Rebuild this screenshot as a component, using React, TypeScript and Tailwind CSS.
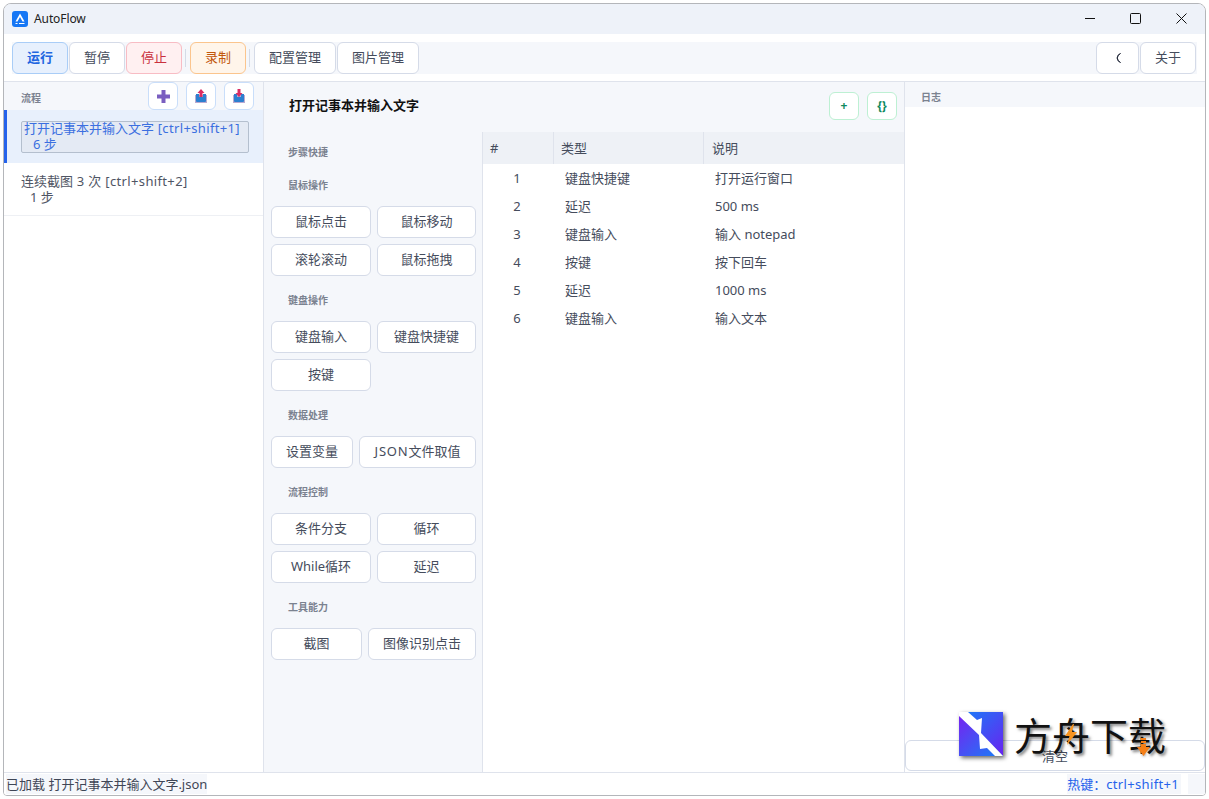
import type { ReactNode } from 'react';

const FONT = "font-['Noto_Sans','Noto_Sans_CJK_SC',sans-serif]";

const steps: [string, string, string][] = [
    ['1', '键盘快捷键', '打开运行窗口'],
    ['2', '延迟', '500 ms'],
    ['3', '键盘输入', '输入 notepad'],
    ['4', '按键', '按下回车'],
    ['5', '延迟', '1000 ms'],
    ['6', '键盘输入', '输入文本'],
];

function TopBtn({ className, children }: { className: string; children: ReactNode }) {
    return (
        <div className={`h-8 flex items-center justify-center rounded-[6px] border text-[13px] ${className}`}>
            {children}
        </div>
    );
}

function Sep() {
    return <div className="w-px h-[18px] ml-[3px] mr-[4px] bg-[#d5dbe6]" />;
}

function StepBtn({ children }: { children: ReactNode }) {
    return (
        <div className="h-8 flex items-center justify-center rounded-[6px] border border-[#d5dbe8] bg-white text-[13px] text-[#454c5c]">
            {children}
        </div>
    );
}

function GroupLabel({ children }: { children: ReactNode }) {
    return <div className="pl-[17px] text-[10px] leading-[14px] font-bold text-[#7b8290]">{children}</div>;
}

function IconBtn({ children }: { children: ReactNode }) {
    return (
        <div className="w-[30px] h-[28px] flex items-center justify-center rounded-[6px] border border-[#c9defa] bg-white">
            {children}
        </div>
    );
}

function TrayIcon({ down }: { down?: boolean }) {
    return (
        <svg width="16" height="18" viewBox="0 0 16 18">
            <rect x="2" y="8" width="12" height="8" fill="#b9a9d0" />
            <path d="M3 7h3v3h4V7h3v7a1 1 0 0 1-1 1H4a1 1 0 0 1-1-1z" fill="#2b7fd0" />
            {down ? (
                <path d="M6.500 2h3v4h2L8 10 4.500 6h2z" fill="#d92c63" />
            ) : (
                <path d="M8 2l3.500 4h-2v4h-3V6h-2z" fill="#d92c63" />
            )}
        </svg>
    );
}

export default function App() {
    return (
        <div className={`w-[1209px] h-[799px] bg-white p-[3px] ${FONT}`}>
            <div className="w-[1203px] h-[793px] flex flex-col border border-[#b4b6ba] rounded-t-[8px] rounded-b-[4px] overflow-hidden bg-white">
                {/* title bar */}
                <div className="h-[30px] shrink-0 flex items-center bg-[#eef2f9]">
                    <svg className="ml-[8px]" width="16" height="16" viewBox="0 0 16 16">
                        <rect width="16" height="16" rx="3" fill="#1677f5" />
                        <path d="M8 2.500L3.500 10.500h2L8 6l2.500 4.500h2z" fill="#fff" />
                        <path d="M3.500 12.500h2M7 12.500h5.500" stroke="#fff" strokeWidth="1" />
                    </svg>
                    <span className="ml-[6px] text-[12px] tracking-[-0.1px] text-[#222]">AutoFlow</span>
                    <div className="ml-auto pb-[2px] flex items-center text-[#111]">
                        <svg className="mr-[35px]" width="10" height="10" viewBox="0 0 10 10">
                            <path d="M0 5.500h10" stroke="currentColor" strokeWidth="1" />
                        </svg>
                        <svg className="mr-[35px]" width="11" height="11" viewBox="0 0 11 11">
                            <rect x=".5" y=".5" width="10" height="10" rx="1" fill="none" stroke="currentColor" strokeWidth="1" />
                        </svg>
                        <svg className="mr-[18px]" width="11" height="11" viewBox="0 0 11 11">
                            <path d="M.5.500l10 10M10.500.500l-10 10" stroke="currentColor" strokeWidth="1" />
                        </svg>
                    </div>
                </div>

                {/* toolbar */}
                <div className="h-[48px] shrink-0 flex items-start pt-[8px] pl-[8px] pr-[8px] border-b border-[#dfe3ec]">
                    <div className="flex-1 h-8 flex items-center bg-[#f5f7fb]">
                        <TopBtn className="w-[56px] border-[#a9cdf7] bg-[#e7f0fd] text-[#1f66e0] font-bold">运行</TopBtn>
                        <TopBtn className="ml-px w-[56px] border-[#d5dbe8] bg-white text-[#454c5c]">暂停</TopBtn>
                        <TopBtn className="ml-px w-[56px] border-[#f8bcc4] bg-[#fff0f1] text-[#c9303e]">停止</TopBtn>
                        <Sep />
                        <TopBtn className="w-[56px] border-[#fbc58d] bg-[#fff5ea] text-[#c2570c]">录制</TopBtn>
                        <Sep />
                        <TopBtn className="w-[82px] border-[#d5dbe8] bg-white text-[#454c5c]">配置管理</TopBtn>
                        <TopBtn className="ml-px w-[82px] border-[#d5dbe8] bg-white text-[#454c5c]">图片管理</TopBtn>
                        <TopBtn className="ml-auto w-[43px] border-[#d5dbe8] bg-white">
                            <svg width="7" height="10" viewBox="0 0 7 10">
                                <path d="M6.500.500A4.800 4.800 0 0 0 6.500 9.500M6.500.500A6 6 0 0 0 3 5a6 6 0 0 0 3.500 4.500" fill="none" stroke="#2a3040" strokeWidth="1" />
                            </svg>
                        </TopBtn>
                        <TopBtn className="ml-px mr-px w-[56px] border-[#d5dbe8] bg-white text-[#454c5c]">关于</TopBtn>
                    </div>
                </div>

                {/* body */}
                <div className="flex-1 min-h-0 flex">
                    {/* flows */}
                    <div className="w-[260px] shrink-0 flex flex-col border-r border-[#dfe3ec] bg-white">
                        <div className="h-[28px] shrink-0 flex items-center bg-[#f5f7fb] pl-[17px] pr-[9px]">
                            <span className="pt-[4px] text-[10px] font-bold text-[#7b8290]">流程</span>
                            <div className="ml-auto flex gap-[8px]">
                                <IconBtn>
                                    <svg width="15" height="15" viewBox="0 0 15 15">
                                        <path d="M5.500 1h4v4.500H14v4H9.500V14h-4V9.500H1v-4h4.500z" fill="#7a5ec0" />
                                    </svg>
                                </IconBtn>
                                <IconBtn><TrayIcon /></IconBtn>
                                <IconBtn><TrayIcon down /></IconBtn>
                            </div>
                        </div>
                        <div className="h-[53px] shrink-0 flex items-center bg-[#e8f0fc] border-l-[3px] border-[#2563eb] pl-[14px] pr-[14px]">
                            <div className="w-full h-[32px] border border-[#b4bfce] rounded-[2px] bg-[#e4eaf4] pl-[2px] text-[13px] leading-[16px] text-[#3b6fe0]">
                                <div className="-mt-[2px]">
                                    <div>打开记事本并输入文字<span className="tracking-[0.35px]"> [ctrl+shift+1]</span></div>
                                    <div className="pl-[9px]">6 步</div>
                                </div>
                            </div>
                        </div>
                        <div className="h-[53px] shrink-0 flex items-center border-b border-[#eef0f4] pl-[17px] text-[13px] leading-[16px] text-[#4f5564]">
                            <div>
                                <div>连续截图<span className="tracking-[0.35px]"> 3 次 [ctrl+shift+2]</span></div>
                                <div className="pl-[9px]">1 步</div>
                            </div>
                        </div>
                    </div>

                    {/* editor */}
                    <div className="w-[641px] shrink-0 flex flex-col bg-[#f5f7fb] border-r border-[#dfe3ec]">
                        <div className="h-[50px] shrink-0 flex items-start pl-[25px] pr-[7px] pt-[10px]">
                            <span className="mt-[3px] text-[13px] font-bold leading-[20px] text-[#111]">打开记事本并输入文字</span>
                            <div className="ml-auto flex gap-[8px]">
                                <div className="w-[30px] h-[28px] flex items-center justify-center rounded-[6px] border border-[#bdf0d3] bg-white text-[12px] font-bold text-[#0f8a5f]">+</div>
                                <div className="w-[30px] h-[28px] flex items-center justify-center rounded-[6px] border border-[#bdf0d3] bg-white text-[12px] font-bold text-[#0f8a5f]">{'{}'}</div>
                            </div>
                        </div>
                        <div className="flex-1 min-h-0 flex">
                            {/* step palette */}
                            <div className="w-[219px] shrink-0 flex flex-col border-r border-[#dfe3ec] pl-[7px] pr-[6px] pt-[13px]">
                                <GroupLabel>步骤快捷</GroupLabel>
                                <div className="mt-[19px]"><GroupLabel>鼠标操作</GroupLabel></div>
                                <div className="mt-[14px] grid grid-cols-[100px_99px] gap-[6px]">
                                    <StepBtn>鼠标点击</StepBtn>
                                    <StepBtn>鼠标移动</StepBtn>
                                    <StepBtn>滚轮滚动</StepBtn>
                                    <StepBtn>鼠标拖拽</StepBtn>
                                </div>
                                <div className="mt-[17px]"><GroupLabel>键盘操作</GroupLabel></div>
                                <div className="mt-[14px] grid grid-cols-[100px_99px] gap-[6px]">
                                    <StepBtn>键盘输入</StepBtn>
                                    <StepBtn>键盘快捷键</StepBtn>
                                    <StepBtn>按键</StepBtn>
                                </div>
                                <div className="mt-[17px]"><GroupLabel>数据处理</GroupLabel></div>
                                <div className="mt-[14px] grid grid-cols-[82px_117px] gap-x-[6px]">
                                    <StepBtn>设置变量</StepBtn>
                                    <StepBtn><span className="tracking-[0.8px]">JSON</span>文件取值</StepBtn>
                                </div>
                                <div className="mt-[17px]"><GroupLabel>流程控制</GroupLabel></div>
                                <div className="mt-[14px] grid grid-cols-[100px_99px] gap-[6px]">
                                    <StepBtn>条件分支</StepBtn>
                                    <StepBtn>循环</StepBtn>
                                    <StepBtn>While循环</StepBtn>
                                    <StepBtn>延迟</StepBtn>
                                </div>
                                <div className="mt-[17px]"><GroupLabel>工具能力</GroupLabel></div>
                                <div className="mt-[14px] grid grid-cols-[91px_108px] gap-x-[6px]">
                                    <StepBtn>截图</StepBtn>
                                    <StepBtn>图像识别点击</StepBtn>
                                </div>
                            </div>
                            {/* table */}
                            <div className="flex-1 bg-white">
                                <div className="h-[32px] flex items-center bg-[#eef1f6] text-[13px] text-[#454c5c]">
                                    <div className="w-[71px] h-full flex items-center pl-[7px] pt-[2px] border-r border-[#dfe3ec]">#</div>
                                    <div className="w-[150px] h-full flex items-center pl-[7px] pt-[2px] border-r border-[#dfe3ec]">类型</div>
                                    <div className="flex-1 pl-[8px] pt-[2px]">说明</div>
                                </div>
                                {steps.map(([n, type, desc]) => (
                                    <div key={n} className="h-[28px] flex items-center pt-[2px] text-[13px] text-[#454c5c]">
                                        <div className="w-[71px] pr-[3px] text-center">{n}</div>
                                        <div className="w-[150px] pl-[11px]">{type}</div>
                                        <div className="flex-1 pl-[11px]">{desc}</div>
                                    </div>
                                ))}
                            </div>
                        </div>
                    </div>

                    {/* log */}
                    <div className="flex-1 flex flex-col bg-white">
                        <div className="h-[25px] shrink-0 flex items-center pl-[16px] pt-[5px] bg-[#f5f7fb] text-[10px] font-bold text-[#7b8290]">日志</div>
                        <div className="flex-1" />
                        <div className="h-[31px] shrink-0 mb-px pt-[3px] flex items-center justify-center rounded-[6px] border border-[#d5dbe8] bg-white text-[13px] text-[#454c5c]">清空</div>
                    </div>
                </div>

                {/* status bar */}
                <div className="h-[23px] shrink-0 flex items-center border-t border-[#dfe3ec] bg-white">
                    <span className="ml-[2px] text-[13px] leading-[20px] text-[#3f4656] bg-[#f5f7fb]">已加载 打开记事本并输入文字.json</span>
                    <span className="ml-auto text-[13px] leading-[20px] text-[#2563eb] bg-[#f5f7fb] pr-[2px]">
                        热键：<span className="tracking-[0.33px]">ctrl+shift+1</span>
                    </span>
                    <span className="ml-[7px] w-[17px] h-[20px] bg-[#f5f7fb]" />
                </div>
            </div>

            {/* watermark */}
            <div className="absolute left-[959px] top-[711px] flex items-center">
                <svg className="drop-shadow-[2px_2px_2px_rgba(0,0,0,0.6)]" width="44" height="44" viewBox="0 0 44 44">
                    <defs>
                        <linearGradient id="wmA" x1="0" y1="0" x2="1" y2="1">
                            <stop offset="0" stopColor="#7a1ff0" />
                            <stop offset="1" stopColor="#1680f8" />
                        </linearGradient>
                        <linearGradient id="wmB" x1="0" y1="0" x2="1" y2="1">
                            <stop offset="0" stopColor="#1680f8" />
                            <stop offset="1" stopColor="#6a22f0" />
                        </linearGradient>
                    </defs>
                    <path d="M0 0H44V44Z" fill="url(#wmB)" />
                    <path d="M0 0V44H44Z" fill="url(#wmA)" />
                    <path d="M0 0H9L18 8L23 6L22 21L44 44H36L28 36L21 37L20 23L0 4Z" fill="#fff" />
                </svg>
                <div className="relative ml-[11px] text-[38px] leading-[45px] text-[#111] font-['Noto_Sans_CJK_SC',sans-serif] [text-shadow:2px_2px_3px_rgba(0,0,0,0.5)]">
                    方舟下载
                    <svg className="absolute left-[51px] top-[13px]" width="12" height="21" viewBox="0 0 12 21">
                        <path d="M8 0L0 12h4.500L2 21l10-13H7l2-8z" fill="#f79420" />
                    </svg>
                    <svg className="absolute left-[123px] top-[27px]" width="13" height="18" viewBox="0 0 13 18">
                        <path d="M4 0h5v2H4zM4 3h5v2H4zM4 6h5v3h4l-6.500 9L0 9h4z" fill="#f57f17" />
                    </svg>
                </div>
            </div>
        </div>
    );
}
